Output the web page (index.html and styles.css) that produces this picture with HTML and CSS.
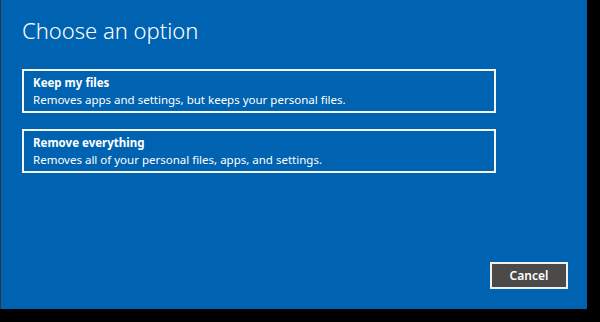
FILE: index.html
```html
<!DOCTYPE html>
<html lang="en">
<head>
    <meta charset="UTF-8">
    <title>Choose an option</title>
    <link rel="stylesheet" href="styles.css">
</head>
<body>

    <div class="panel">
        <h1 class="title">Choose an option</h1>

        <div class="options">
            <div class="option">
                <div class="option-name">Keep my files</div>
                <div class="option-desc">Removes apps and settings, but keeps your personal files.</div>
            </div>
            <div class="option">
                <div class="option-name">Remove everything</div>
                <div class="option-desc">Removes all of your personal files, apps, and settings.</div>
            </div>
        </div>

        <div class="footer">
            <button class="cancel-button">Cancel</button>
        </div>
    </div>

</body>
</html>
```

FILE: styles.css
```css
body, html {
    margin: 0;
    padding: 0;
}

body {
    background-color: #000;
    font-family: "Noto Sans", "Open Sans", sans-serif;
    color: white;
    width: 600px;
    height: 322px;
    overflow: hidden;
}

.panel {
    background-color: #0063b1;
    width: 586px;
    height: 309px;
    margin-left: 1px;
    padding: 0 21px;
    box-sizing: border-box;
    display: flex;
    flex-direction: column;
    box-shadow: -1px 0 0 #333;
}

.title {
    font-weight: 300;
    font-size: 22px;
    line-height: 30px;
    margin: 15px 0 0 0;
}

.options {
    margin-top: 24px;
    display: flex;
    flex-direction: column;
    gap: 16px;
}

.option {
    width: 474px;
    height: 44px;
    box-sizing: border-box;
    border: 2px solid #f4f4f4;
    padding: 3px 9px 0 9px;
}

.option-name {
    font-size: 11.5px;
    font-weight: bold;
    line-height: 17px;
}

.option-desc {
    font-size: 11.5px;
    line-height: 17px;
}

.footer {
    margin-top: auto;
    margin-bottom: 20px;
    display: flex;
    justify-content: flex-end;
}

.cancel-button {
    background-color: #4c4a48;
    color: white;
    border: 2px solid #f0f0f0;
    width: 78px;
    height: 27px;
    font-family: "Noto Sans", "Open Sans", sans-serif;
    font-size: 12px;
    font-weight: 600;
    margin-right: -2px;
}
```
